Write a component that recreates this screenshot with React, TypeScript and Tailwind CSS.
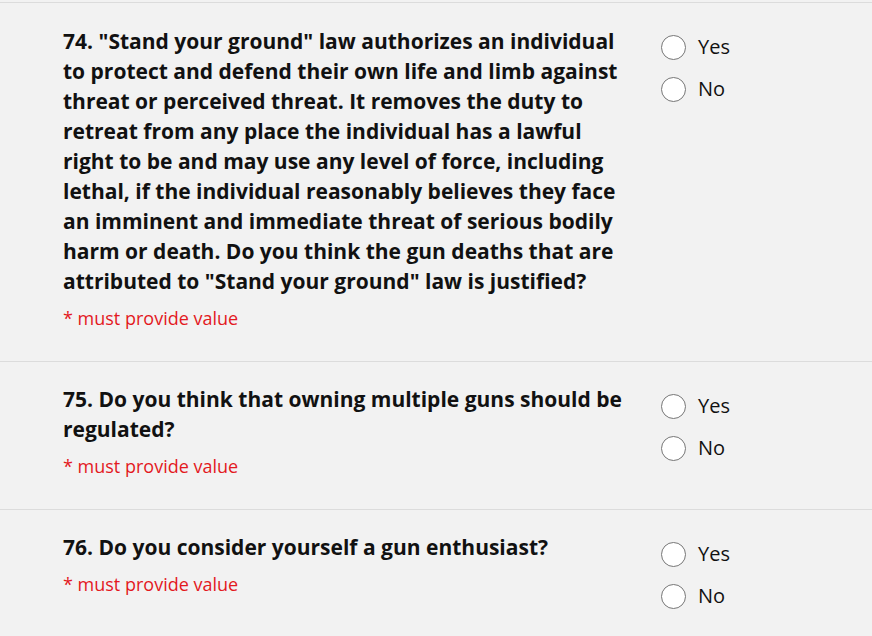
const questions = [
  {
    n: 74,
    text: '"Stand your ground" law authorizes an individual to protect and defend their own life and limb against threat or perceived threat. It removes the duty to retreat from any place the individual has a lawful right to be and may use any level of force, including lethal, if the individual reasonably believes they face an imminent and immediate threat of serious bodily harm or death. Do you think the gun deaths that are attributed to "Stand your ground" law is justified?',
  },
  { n: 75, text: "Do you think that owning multiple guns should be regulated?" },
  { n: 76, text: "Do you consider yourself a gun enthusiast?" },
]

function Radio({ label }: { label: string }) {
  return (
    <label className="flex h-[42px] items-center">
      <span className="h-[25px] w-[25px] rounded-full border-[1.5px] border-[#767676] bg-white" />
      <span className="ml-[12px] text-[20px] leading-[30px] text-[#111]">{label}</span>
    </label>
  )
}

export default function App() {
  return (
    <div
      className="min-h-[636px] w-[872px] bg-[#f2f2f2] pt-[2px]"
      style={{ fontFamily: '"Open Sans", sans-serif' }}
    >
      {questions.map((q, i) => (
        <div key={q.n} className="flex items-start border-t border-[#dcdcdc] pb-[30px] pl-[63px]">
          <div className={i === 0 ? "w-[566px] pt-[23px]" : "w-[566px] pt-[22px]"}>
            <p className="text-[21px] font-bold leading-[30px] text-[#111]">
              {q.n}. {q.text}
            </p>
            <p className="mt-[9px] text-[18px] leading-[26px] text-[#e3191e]">* must provide value</p>
          </div>
          <div className="ml-[32px] flex flex-col pt-[23px]">
            <Radio label="Yes" />
            <Radio label="No" />
          </div>
        </div>
      ))}
    </div>
  )
}
